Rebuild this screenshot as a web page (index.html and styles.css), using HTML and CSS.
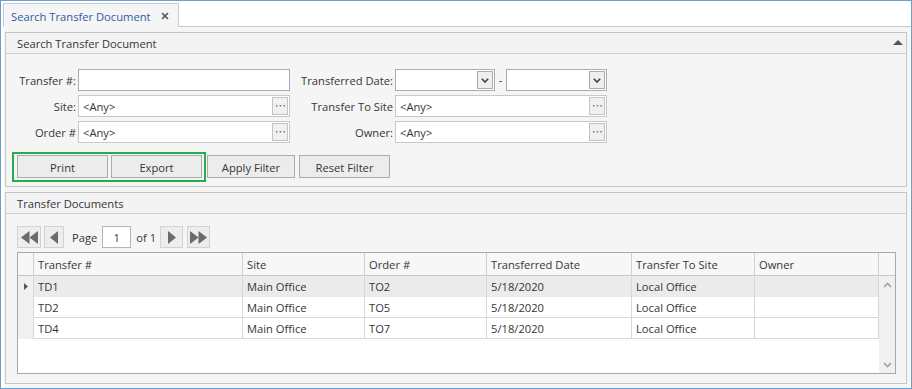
FILE: index.html
```html
<!DOCTYPE html>
<html>
<head>
<meta charset="utf-8">
<link rel="stylesheet" href="styles.css">
</head>
<body>
<div class="window">
  <div class="tabstrip">
    <div class="tab">
      <span class="tab-title">Search Transfer Document</span>
      <svg class="tab-close" width="8" height="8" viewBox="0 0 8 8"><path d="M1 1L7 7M7 1L1 7" stroke="#555" stroke-width="1.6"/></svg>
    </div>
    <div class="tab-fill"></div>
  </div>
  <div class="tab-body">
    <section class="panel panel-search">
      <header class="panel-header">
        <span>Search Transfer Document</span>
        <svg class="collapse" width="10" height="5" viewBox="0 0 10 5"><polygon points="5,0 10,5 0,5" fill="#555"/></svg>
      </header>
      <div class="search-content">
        <div class="form-grid">
          <label class="lbl lbl1">Transfer #:</label>
          <div class="field"></div>
          <label class="lbl lbl2">Transferred Date:</label>
          <div class="date-range">
            <div class="combo combo-a"><span class="drop"><svg width="8" height="5" viewBox="0 0 8 5"><path d="M0.8 0.8L4 4L7.2 0.8" fill="none" stroke="#404040" stroke-width="1.6"/></svg></span></div>
            <span class="dash">-</span>
            <div class="combo combo-b"><span class="drop"><svg width="8" height="5" viewBox="0 0 8 5"><path d="M0.8 0.8L4 4L7.2 0.8" fill="none" stroke="#404040" stroke-width="1.6"/></svg></span></div>
          </div>

          <label class="lbl lbl1">Site:</label>
          <div class="field lookup"><span class="val">&lt;Any&gt;</span><span class="dots"><svg width="9" height="2" viewBox="0 0 9 2"><rect x="0" y="0" width="1.5" height="1.5" fill="#777"/><rect x="3.7" y="0" width="1.5" height="1.5" fill="#777"/><rect x="7.4" y="0" width="1.5" height="1.5" fill="#777"/></svg></span></div>
          <label class="lbl lbl2">Transfer To Site</label>
          <div class="field lookup"><span class="val">&lt;Any&gt;</span><span class="dots"><svg width="9" height="2" viewBox="0 0 9 2"><rect x="0" y="0" width="1.5" height="1.5" fill="#777"/><rect x="3.7" y="0" width="1.5" height="1.5" fill="#777"/><rect x="7.4" y="0" width="1.5" height="1.5" fill="#777"/></svg></span></div>

          <label class="lbl lbl1">Order #</label>
          <div class="field lookup"><span class="val">&lt;Any&gt;</span><span class="dots"><svg width="9" height="2" viewBox="0 0 9 2"><rect x="0" y="0" width="1.5" height="1.5" fill="#777"/><rect x="3.7" y="0" width="1.5" height="1.5" fill="#777"/><rect x="7.4" y="0" width="1.5" height="1.5" fill="#777"/></svg></span></div>
          <label class="lbl lbl2">Owner:</label>
          <div class="field lookup"><span class="val">&lt;Any&gt;</span><span class="dots"><svg width="9" height="2" viewBox="0 0 9 2"><rect x="0" y="0" width="1.5" height="1.5" fill="#777"/><rect x="3.7" y="0" width="1.5" height="1.5" fill="#777"/><rect x="7.4" y="0" width="1.5" height="1.5" fill="#777"/></svg></span></div>
        </div>
        <div class="actions">
          <div class="highlight">
            <button class="btn btn-print">Print</button>
            <button class="btn btn-export">Export</button>
          </div>
          <button class="btn btn-apply">Apply Filter</button>
          <button class="btn btn-reset">Reset Filter</button>
        </div>
      </div>
    </section>

    <section class="panel panel-results">
      <header class="panel-header"><span>Transfer Documents</span></header>
      <div class="results-content">
        <div class="pager">
          <span class="pg-btn pg-first"><svg width="17" height="13" viewBox="0 0 17 13"><polygon points="8.5,0 0,6.5 8.5,13" fill="#6b6b6b"/><polygon points="17,0 8.5,6.5 17,13" fill="#6b6b6b"/></svg></span>
          <span class="pg-btn pg-prev"><svg width="8" height="13" viewBox="0 0 8 13"><polygon points="8,0 0,6.5 8,13" fill="#6b6b6b"/></svg></span>
          <span class="pg-text pg-page">Page</span>
          <span class="pg-input">1</span>
          <span class="pg-text pg-of">of 1</span>
          <span class="pg-btn pg-next"><svg width="8" height="13" viewBox="0 0 8 13"><polygon points="0,0 8,6.5 0,13" fill="#6b6b6b"/></svg></span>
          <span class="pg-btn pg-last"><svg width="17" height="13" viewBox="0 0 17 13"><polygon points="0,0 8.5,6.5 0,13" fill="#6b6b6b"/><polygon points="8.5,0 17,6.5 8.5,13" fill="#6b6b6b"/></svg></span>
        </div>
        <div class="grid">
          <div class="grid-head">
            <div class="hcell ind"></div>
            <div class="hcell">Transfer #</div>
            <div class="hcell">Site</div>
            <div class="hcell">Order #</div>
            <div class="hcell">Transferred Date</div>
            <div class="hcell">Transfer To Site</div>
            <div class="hcell">Owner</div>
            <div class="hcell sb"></div>
          </div>
          <div class="grid-body">
            <div class="rows">
              <div class="row selected">
                <div class="cell ind"><svg width="4" height="7" viewBox="0 0 4 7"><polygon points="0,0 4,3.5 0,7" fill="#555"/></svg></div>
                <div class="cell">TD1</div>
                <div class="cell">Main Office</div>
                <div class="cell">TO2</div>
                <div class="cell">5/18/2020</div>
                <div class="cell">Local Office</div>
                <div class="cell"></div>
              </div>
              <div class="row">
                <div class="cell ind"></div>
                <div class="cell">TD2</div>
                <div class="cell">Main Office</div>
                <div class="cell">TO5</div>
                <div class="cell">5/18/2020</div>
                <div class="cell">Local Office</div>
                <div class="cell"></div>
              </div>
              <div class="row">
                <div class="cell ind"></div>
                <div class="cell">TD4</div>
                <div class="cell">Main Office</div>
                <div class="cell">TO7</div>
                <div class="cell">5/18/2020</div>
                <div class="cell">Local Office</div>
                <div class="cell"></div>
              </div>
            </div>
            <div class="vscroll">
              <svg width="9" height="6" viewBox="0 0 9 6"><path d="M1 5L4.5 1.5L8 5" fill="none" stroke="#a0a0a0" stroke-width="1.6"/></svg>
              <svg width="9" height="6" viewBox="0 0 9 6"><path d="M1 1L4.5 4.5L8 1" fill="none" stroke="#a0a0a0" stroke-width="1.6"/></svg>
            </div>
          </div>
        </div>
      </div>
    </section>
  </div>
</div>
</body>
</html>
```

FILE: styles.css
```css
* { box-sizing: border-box; }
html, body { margin: 0; padding: 0; }
body {
  font-family: "Open Sans", "Noto Sans", sans-serif;
  font-size: 11.2px;
  color: #363636;
  background: #fff;
}
.window {
  width: 912px;
  height: 389px;
  border: 1px solid #6a9fd6;
  background: #fff;
  display: flex;
  flex-direction: column;
}
.tabstrip {
  height: 26px;
  display: flex;
  align-items: flex-end;
  padding-left: 2px;
  flex: none;
}
.tab {
  height: 24px;
  border: 1px solid #c9c9c9;
  border-bottom: none;
  background: #f5f5f5;
  display: flex;
  align-items: center;
  padding: 1px 9px 0 7px;
  gap: 10px;
}
.tab-title { color: #2f5c9f; }
.tab-close { display: block; }
.tab-fill {
  flex: 1;
  height: 1px;
  background: #c9c9c9;
}
.tab-body {
  flex: 1;
  background: #f5f5f5;
  margin: 0 1px 0 3px;
  padding: 5px 3px 0 1px;
}
.panel {
  border: 1px solid #c6c6c6;
  background: #f5f5f5;
}
.panel-header {
  height: 21px;
  border-bottom: 1px solid #d2d2d2;
  background: #f3f3f3;
  display: flex;
  align-items: center;
  justify-content: space-between;
  padding: 1px 3px 0 11px;
}
.collapse { display: block; margin-top: -3px; }
.search-content {
  height: 132px;
  padding: 15px 0 0 0;
}
.form-grid {
  display: grid;
  grid-template-columns: 72px 212px 105px 212px;
  grid-auto-rows: 22px;
  row-gap: 4px;
}
.lbl {
  text-align: right;
  align-self: center;
  white-space: nowrap;
  padding-top: 1px;
}
.lbl1 { padding-right: 2px; }
.lbl2 { padding-right: 2px; }
.field {
  height: 22px;
  border: 1px solid #abadb3;
  background: #fff;
  display: flex;
  align-items: center;
  padding-left: 4px;
}
.field.lookup { border-color: #c8c8c8; }
.val { flex: 1; padding-top: 1px; }
.dots {
  width: 16px;
  height: 18px;
  margin-right: 1px;
  border: 1px solid #c4c4c4;
  background: #f0f0f0;
  display: flex;
  align-items: center;
  justify-content: center;
}
.dots svg { display: block; }
.date-range { display: flex; }
.combo {
  height: 22px;
  border: 1px solid #abadb3;
  background: #fff;
  display: flex;
  justify-content: flex-end;
  padding: 1px;
}
.combo-a { width: 100px; }
.combo-b { width: 101px; }
.dash {
  width: 11px;
  text-align: center;
  line-height: 22px;
}
.drop {
  width: 16px;
  border: 1px solid #acacac;
  background: #eeeeee;
  display: flex;
  align-items: center;
  justify-content: center;
}
.drop svg { display: block; }
.actions {
  display: flex;
  align-items: flex-start;
  margin-top: 9px;
  padding-left: 6px;
}
.highlight {
  display: flex;
  gap: 3px;
  border: 2px solid #27ad4f;
  padding: 1px 2px 2px 3px;
}
.btn {
  height: 23px;
  border: 1px solid #ababab;
  background: #ececec;
  font-family: inherit;
  font-size: 11.2px;
  color: #363636;
  padding: 1px 0 0 0;
}
.btn-print, .btn-export { width: 91px; }
.btn-apply { width: 88px; margin: 3px 0 0 1px; }
.btn-reset { width: 91px; margin: 3px 0 0 4px; }

.panel-results { margin-top: 5px; }
.results-content {
  padding: 12px 10px 9px 11px;
}
.pager {
  display: flex;
  align-items: center;
  height: 22px;
}
.pg-btn {
  height: 22px;
  border: 1px solid #d2d2d2;
  background: #ededed;
  display: flex;
  align-items: center;
  justify-content: center;
}
.pg-btn svg { display: block; }
.pg-first { width: 24px; }
.pg-prev { width: 20px; margin-left: 3px; }
.pg-page { margin-left: 8px; padding-top: 1px; }
.pg-input {
  width: 29px;
  height: 22px;
  margin-left: 5px;
  border: 1px solid #b5b5b5;
  background: #fff;
  text-align: center;
  line-height: 21px;
}
.pg-of { margin-left: 5px; padding-top: 1px; }
.pg-next { width: 23px; margin-left: 4px; }
.pg-last { width: 23px; margin-left: 4px; }

.grid {
  margin-top: 4px;
  height: 122px;
  border: 1px solid #a8a8a8;
  background: #fff;
  display: flex;
  flex-direction: column;
}
.grid-head {
  display: grid;
  grid-template-columns: 16px 209px 122px 122px 145px 123px 124px 16px;
  height: 23px;
  border-bottom: 1px solid #c8c8c8;
  background: #f7f7f7;
  flex: none;
}
.hcell {
  border-right: 1px solid #d0d0d0;
  padding-left: 4px;
  line-height: 23px;
  white-space: nowrap;
}
.hcell.sb { border-right: none; }
.grid-body {
  flex: 1;
  display: flex;
}
.rows { width: 861px; }
.row {
  display: grid;
  grid-template-columns: 16px 209px 122px 122px 145px 123px 124px;
  height: 21px;
  border-bottom: 1px solid #d8d8d8;
}
.cell {
  border-right: 1px solid #d8d8d8;
  padding-left: 4px;
  line-height: 21px;
  white-space: nowrap;
}
.cell.ind {
  background: #f0f0f0;
  padding-left: 0;
  display: flex;
  align-items: center;
  justify-content: center;
}
.cell.ind svg { display: block; }
.row.selected .cell { background: #ebebeb; }
.row.selected .cell.ind { background: #f0f0f0; }
.vscroll {
  width: 16px;
  background: #f0f0f0;
  display: flex;
  flex-direction: column;
  justify-content: space-between;
  align-items: center;
  padding: 6px 0 5px;
}
.vscroll svg { display: block; }
```
